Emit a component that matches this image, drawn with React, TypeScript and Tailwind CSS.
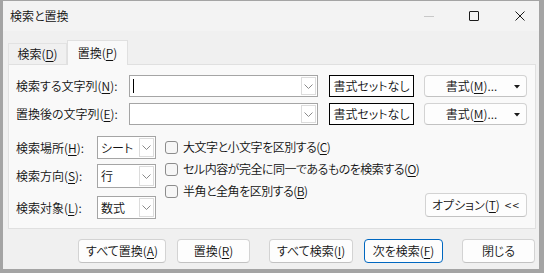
import React from "react";

const U = ({ children }: { children: React.ReactNode }) => (
  <span className="underline decoration-1 underline-offset-[2px]">{children}</span>
);

function Chevron() {
  return (
    <svg width="9" height="5" viewBox="0 0 9 5" className="block">
      <path d="M0.5 0.5 L4.5 4.5 L8.5 0.5" fill="none" stroke="#8a8a8a" strokeWidth="1" />
    </svg>
  );
}

function Combo({ cls, text, cursor }: { cls: string; text?: string; cursor?: boolean }) {
  return (
    <div className={`flex shrink-0 border border-[#a5a5a5] bg-white ${cls}`}>
      <div className="flex-1 flex items-center pl-[3px]">
        {cursor && <div className="w-px h-[14px] bg-black" />}
        {text && <span className="leading-none">{text}</span>}
      </div>
      <div className="w-[15px] my-px mr-px border border-[#dcdcdc] flex items-center justify-center">
        <Chevron />
      </div>
    </div>
  );
}

function Btn({ cls, children, primary }: { cls: string; children: React.ReactNode; primary?: boolean }) {
  return (
    <div
      className={`flex shrink-0 items-center justify-center rounded-[4px] bg-[#fdfdfd] border ${
        primary ? "border-[#0067c0]" : "border-[#d3d3d3] border-b-[#c2c2c2]"
      } ${cls}`}
    >
      <span className="leading-none">{children}</span>
    </div>
  );
}

function Check({ children }: { children: React.ReactNode }) {
  return (
    <div className="h-[22px] flex items-center">
      <div className="w-[13px] h-[13px] shrink-0 rounded-[3px] border border-[#8c8c8c] bg-[#f6f6f6]" />
      <span className="ml-[5px] leading-none tracking-[-0.5px]">{children}</span>
    </div>
  );
}

export default function App() {
  return (
    <div className="w-[544px] h-[273px] bg-[#a4a4a4] pl-[3px] pr-[5px] pt-px pb-[4px] font-['Noto_Sans_CJK_JP',sans-serif] font-[350] [font-feature-settings:'palt'] whitespace-nowrap text-[12px] text-[#111]">
      <div className="w-full h-full bg-[#f0f0f0] flex flex-col">
        {/* title bar */}
        <div className="h-[30px] bg-[#f3f3f3] flex items-center pl-[7px]">
          <span className="leading-none">検索と置換</span>
          <div className="ml-auto flex items-center pr-[14px]">
            <div className="w-[10px] h-px bg-[#c8c8c8]" />
            <div className="ml-[35px] w-[10px] h-[10px] border border-[#1a1a1a] rounded-[1px]" />
            <svg className="ml-[36px] block" width="10" height="10" viewBox="0 0 10 10">
              <path d="M0.5 0.5 L9.5 9.5 M9.5 0.5 L0.5 9.5" stroke="#1a1a1a" strokeWidth="1" />
            </svg>
          </div>
        </div>

        {/* tabs */}
        <div className="mt-[8px] ml-[5px] flex items-end h-[25px] relative z-10">
          <div className="w-[59px] h-[21px] border border-b-0 border-[#e2e2e2] bg-[#f0f0f0] flex items-center justify-center">
            <span className="leading-none">
              検索(<U>D</U>)
            </span>
          </div>
          <div className="w-[61px] h-[25px] -mb-px border border-b-0 border-[#e0e0e0] bg-[#f9f9f9] flex items-center justify-center">
            <span className="leading-none">
              置換(<U>P</U>)
            </span>
          </div>
        </div>

        {/* panel */}
        <div className="ml-[5px] w-[528px] h-[165px] border border-[#e0e0e0] bg-[#f9f9f9] flex flex-col pl-[7px] pt-[10px]">
          <div className="flex items-center h-[22px]">
            <div className="w-[113px] shrink-0">
              検索する文字列(<U>N</U>):
            </div>
            <Combo cls="w-[189px] h-[22px]" cursor />
            <div className="ml-[11px] shrink-0 w-[85px] h-[22px] border border-black bg-white flex items-center justify-center">
              <span className="leading-none">書式セットなし</span>
            </div>
            <Btn cls="ml-[10px] w-[103px] h-[22px] relative">
              <span className="mr-[8px]">
                書式(<U>M</U>)...
              </span>
              <svg className="absolute right-[6px] top-[9px]" width="6" height="4" viewBox="0 0 6 4">
                <path d="M0 0 L6 0 L3 3.5 Z" fill="#1a1a1a" />
              </svg>
            </Btn>
          </div>
          <div className="flex items-center h-[22px] mt-[6px]">
            <div className="w-[113px] shrink-0">
              置換後の文字列(<U>E</U>):
            </div>
            <Combo cls="w-[189px] h-[22px]" />
            <div className="ml-[11px] shrink-0 w-[85px] h-[22px] border border-black bg-white flex items-center justify-center">
              <span className="leading-none">書式セットなし</span>
            </div>
            <Btn cls="ml-[10px] w-[103px] h-[22px] relative">
              <span className="mr-[8px]">
                書式(<U>M</U>)...
              </span>
              <svg className="absolute right-[6px] top-[9px]" width="6" height="4" viewBox="0 0 6 4">
                <path d="M0 0 L6 0 L3 3.5 Z" fill="#1a1a1a" />
              </svg>
            </Btn>
          </div>

          <div className="flex mt-[11px]">
            <div className="flex flex-col shrink-0">
              <div className="flex items-center">
                <div className="w-[81px] shrink-0">
                  検索場所(<U>H</U>):
                </div>
                <Combo cls="w-[59px] h-[23px]" text="シート" />
              </div>
              <div className="flex items-center mt-[5px]">
                <div className="w-[81px] shrink-0">
                  検索方向(<U>S</U>):
                </div>
                <Combo cls="w-[59px] h-[24px]" text="行" />
              </div>
              <div className="flex items-center mt-[8px]">
                <div className="w-[81px] shrink-0">
                  検索対象(<U>L</U>):
                </div>
                <Combo cls="w-[59px] h-[23px]" text="数式" />
              </div>
            </div>
            <div className="flex flex-col ml-[9px]">
              <Check>
                大文字と小文字を区別する(<U>C</U>)
              </Check>
              <Check>
                セル内容が完全に同一であるものを検索する(<U>O</U>)
              </Check>
              <Check>
                半角と全角を区別する(<U>B</U>)
              </Check>
            </div>
            <div className="ml-auto self-end mb-[2px] mr-[8px]">
              <Btn cls="w-[102px] h-[24px]">
                オプション(<U>T</U>)<span className="ml-[5px] tracking-[1px]">&lt;&lt;</span>
              </Btn>
            </div>
          </div>
        </div>

        {/* bottom buttons */}
        <div className="flex mt-[10px] ml-[75px]">
          <Btn cls="w-[88px] h-[24px]">
            すべて置換(<U>A</U>)
          </Btn>
          <Btn cls="ml-[11px] w-[73px] h-[24px]">
            置換(<U>R</U>)
          </Btn>
          <Btn cls="ml-[19px] w-[84px] h-[24px]">
            すべて検索(<U>I</U>)
          </Btn>
          <Btn cls="ml-[11px] w-[79px] h-[24px]" primary>
            次を検索(<U>F</U>)
          </Btn>
          <Btn cls="ml-[19px] w-[73px] h-[24px]">
            閉じる
          </Btn>
        </div>
      </div>
    </div>
  );
}
